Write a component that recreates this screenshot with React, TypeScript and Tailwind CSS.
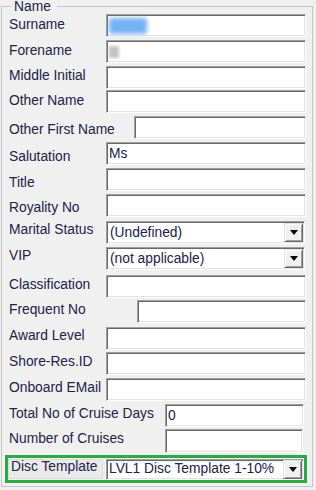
import React from 'react';

type Row = {
	label: string;
	h: string;
	lw: string;
	kind?: 'text' | 'select';
	value?: string;
	shift?: string;
	box?: string;
	blur?: 'blue' | 'gray';
};

const rows: Row[] = [
	{ label: 'Surname', h: 'h-[26px]', lw: 'w-[97px]', blur: 'blue', shift: '-translate-y-[1px]' },
	{ label: 'Forename', h: 'h-[26px]', lw: 'w-[97px]', blur: 'gray', shift: '-translate-y-[1px]' },
	{ label: 'Middle Initial', h: 'h-[24px]', lw: 'w-[97px]' },
	{ label: 'Other Name', h: 'h-[26px]', lw: 'w-[97px]', shift: '-translate-y-[1px]' },
	{ label: 'Other First Name', h: 'h-[26px]', lw: 'w-[125px]', shift: 'translate-y-[2px]' },
	{ label: 'Salutation', h: 'h-[26px]', lw: 'w-[97px]', value: 'Ms', shift: 'translate-y-[3px]' },
	{ label: 'Title', h: 'h-[26px]', lw: 'w-[97px]', shift: 'translate-y-[3px]' },
	{ label: 'Royality No', h: 'h-[27px]', lw: 'w-[97px]', shift: 'translate-y-[2px]' },
	{ label: 'Marital Status', h: 'h-[26px]', lw: 'w-[97px]', kind: 'select', value: '(Undefined)', box: 'mr-[1px]', shift: '-translate-y-[3px]' },
	{ label: 'VIP', h: 'h-[28px]', lw: 'w-[97px]', kind: 'select', value: '(not applicable)', box: 'mr-[1px]', shift: '-translate-y-[3px]' },
	{ label: 'Classification', h: 'h-[25px]', lw: 'w-[97px]' },
	{ label: 'Frequent No', h: 'h-[27px]', lw: 'w-[128px]' },
	{ label: 'Award Level', h: 'h-[25px]', lw: 'w-[97px]', shift: '-translate-y-[3px]' },
	{ label: 'Shore-Res.ID', h: 'h-[26px]', lw: 'w-[97px]' },
	{ label: 'Onboard EMail', h: 'h-[26px]', lw: 'w-[97px]' },
	{ label: 'Total No of Cruise Days', h: 'h-[25px]', lw: 'w-[156px]', value: '0', box: 'mr-[2px]' },
	{ label: 'Number of Cruises', h: 'h-[26px]', lw: 'w-[156px]', box: 'mr-[3px] h-[24px]' },
];

const sunken =
	'border border-t-[#a0a0a0] border-l-[#a0a0a0] border-r-white border-b-white bg-white shadow-[inset_1px_1px_0_#696969,inset_-1px_-1px_0_#e3e3e3]';

const DropButton = () => (
	<div className="mr-[1px] flex h-[19px] w-[19px] items-center justify-center border border-t-[#e3e3e3] border-l-[#e3e3e3] border-r-[#696969] border-b-[#696969] bg-[#f0f0f0] shadow-[inset_1px_1px_0_#ffffff,inset_-1px_-1px_0_#a0a0a0]">
		<svg width="8" height="5" viewBox="0 0 8 5">
			<path d="M0 0 H8 L4 5 Z" fill="#000" />
		</svg>
	</div>
);

const Field: React.FC<{ row: Row }> = ({ row }) => {
	if (row.kind === 'select') {
		return (
			<div className={`flex h-[23px] flex-1 items-center pl-[3px] ${sunken} ${row.box ?? ''}`}>
				<span className="flex-1 leading-[16px]">{row.value}</span>
				<DropButton />
			</div>
		);
	}
	return (
		<div className={`flex h-[23px] flex-1 items-center pl-[2px] ${sunken} ${row.box ?? ''}`}>
			{row.blur === 'blue' && <div className="h-[16px] w-[38px] rounded-[3px] bg-[#78b1f2] blur-[2px]" />}
			{row.blur === 'gray' && <div className="h-[12px] w-[10px] bg-[#c4c4c4] blur-[1.5px]" />}
			{row.value && <span className="leading-[16px]">{row.value}</span>}
		</div>
	);
};

export default function App() {
	return (
		<div className="h-[490px] w-[316px] overflow-hidden bg-[#f0f0f0] font-['Liberation_Sans',Arial,sans-serif] text-[13.8px] text-[#22224a]">
			<fieldset className="ml-[1px] w-[312px] border border-[#c6c6c6] pt-[1px] pr-[6px] pb-[3px] pl-[7px]">
				<legend className="ml-[2px] pr-[6px] pl-[3px] leading-[13px]">Name</legend>
				<div className="flex flex-col">
					{rows.map((row) => (
						<div key={row.label} className={`flex items-start ${row.h}`}>
							<div className={`flex h-[23px] shrink-0 items-center ${row.lw}`}>
								<span className={`whitespace-nowrap leading-[16px] ${row.shift ?? '-translate-y-[2px]'}`}>
									{row.label}
								</span>
							</div>
							<Field row={row} />
						</div>
					))}

					{/* highlighted row */}
					<div className="-mr-[1px] -ml-[4px] flex h-[28px] items-center border-[3px] border-[#2ca845]">
						<div className="flex h-[20px] w-[95px] items-center border border-[#dadada] bg-[#eaeaea] pl-[2px]">
							<span className="-translate-y-[2px] whitespace-nowrap leading-[16px]">Disc Template</span>
						</div>
						<div className={`ml-[3px] flex h-[21px] flex-1 items-center pl-[2px] ${sunken}`}>
							<span className="flex-1 whitespace-nowrap leading-[16px]">LVL1 Disc Template 1-10%</span>
							<DropButton />
						</div>
					</div>
				</div>
			</fieldset>
		</div>
	);
}
